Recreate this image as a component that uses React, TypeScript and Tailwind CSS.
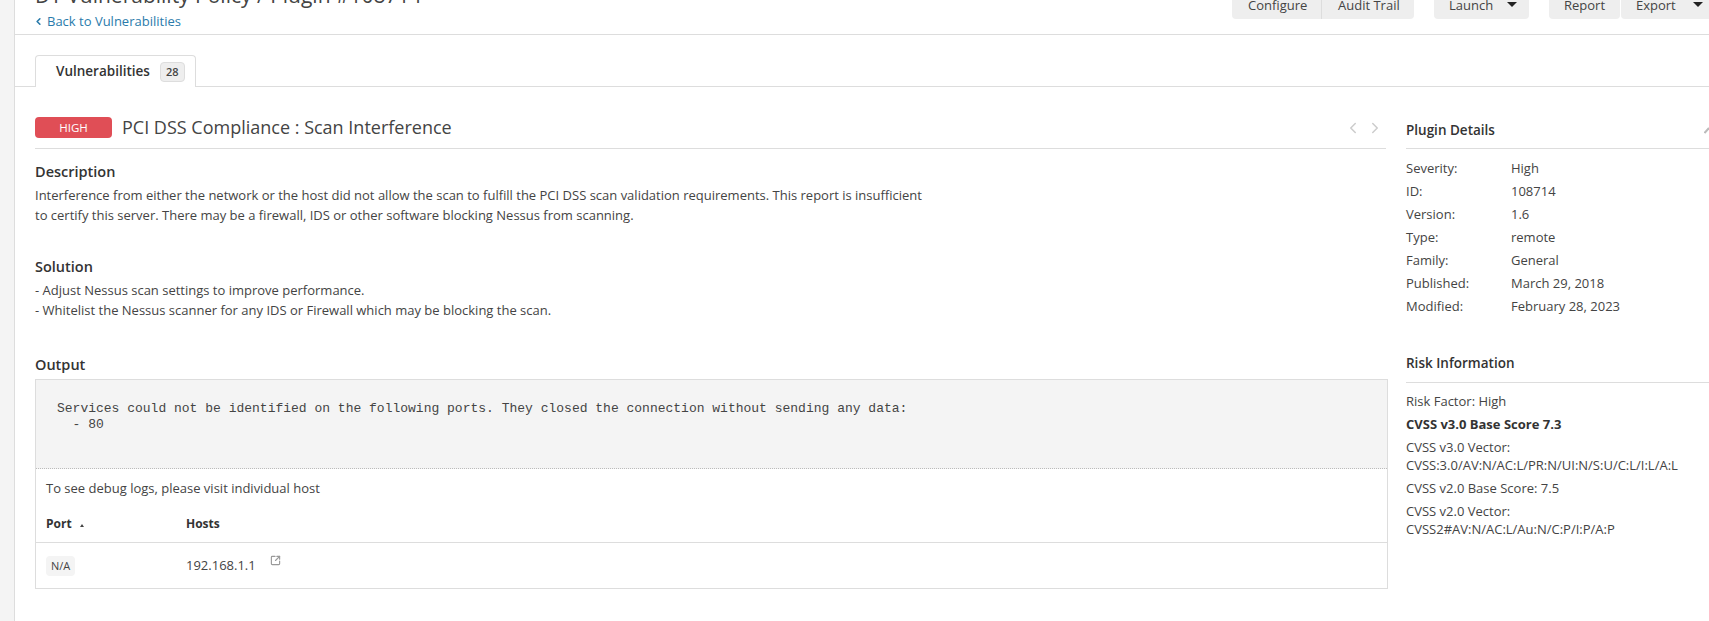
import { ChevronLeft, ChevronRight, SquareArrowOutUpRight } from "lucide-react";

const PLUGIN_DETAILS = [
  ["Severity:", "High"],
  ["ID:", "108714"],
  ["Version:", "1.6"],
  ["Type:", "remote"],
  ["Family:", "General"],
  ["Published:", "March 29, 2018"],
  ["Modified:", "February 28, 2023"],
];

function Caret() {
  return (
    <span className="block h-0 w-0 border-x-[5px] border-t-[5px] border-x-transparent border-t-[#222]" />
  );
}

function Toolbar() {
  return (
    <div className="-mr-[12px] flex h-[19px] shrink-0 text-[13px] leading-[10px] text-[#444]">
      <div className="flex h-[19px] w-[182px] overflow-hidden rounded-b bg-[#eee]">
        <span className="w-[90px] border-r border-[#ddd] pl-4">Configure</span>
        <span className="pl-[16px]">Audit Trail</span>
      </div>
      <div className="ml-5 flex h-[19px] w-[95px] rounded-b bg-[#eee] pl-[15px]">
        <span>Launch</span>
        <span className="mt-[2px] ml-[14px]">
          <Caret />
        </span>
      </div>
      <div className="ml-5 h-[19px] w-[71px] rounded-b bg-[#eee] pl-[15px]">Report</div>
      <div className="ml-px flex h-[19px] w-[100px] rounded-bl bg-[#eee] pl-[15px]">
        <span>Export</span>
        <span className="mt-[2px] ml-[17px]">
          <Caret />
        </span>
      </div>
    </div>
  );
}

export default function App() {
  return (
    <div className="flex h-[621px] w-[1709px] overflow-hidden bg-white font-['Open_Sans',sans-serif] text-[13px] text-[#444]">
      <div className="w-[15px] shrink-0 border-r border-[#ddd] bg-[#f4f4f4]" />
      <div className="min-w-0 flex-1">
        {/* Header */}
        <div className="flex h-[35px] justify-between overflow-hidden border-b border-[#ddd] pl-5">
          <div>
            <div className="-mt-[17px] text-[21px] leading-[24px] text-[#444]">
              DT Vulnerability Policy / Plugin #108714
            </div>
            <div className="mt-[4px] flex items-center text-[13px] leading-[20px] text-[#2a7bab]">
              <ChevronLeft className="mr-[3px] -ml-[2px] h-[11px] w-[11px]" strokeWidth={3.5} />
              Back to Vulnerabilities
            </div>
          </div>
          <Toolbar />
        </div>

        {/* Tabs */}
        <div className="mt-5 flex h-[32px] border-b border-[#ddd] pl-5">
          <div className="flex h-[32px] w-[161px] items-center rounded-t border-x border-t border-[#ddd] bg-white pl-5">
            <span className="text-[13.5px] font-semibold text-[#333]">Vulnerabilities</span>
            <span className="ml-[10px] rounded-sm border border-[#ddd] bg-[#eee] px-[5px] text-[11px] leading-[18px] font-semibold text-[#444]">
              28
            </span>
          </div>
        </div>

        <div className="flex pl-5">
          {/* Main column */}
          <div className="w-[1353px] shrink-0">
            <div className="mt-[30px] mr-[2px] flex h-[32px] items-start border-b border-[#ddd]">
              <span className="flex h-[21px] w-[77px] items-center justify-center rounded-sm bg-[#e04e56] text-[11.5px] text-white">
                HIGH
              </span>
              <span className="ml-[10px] text-[18px] leading-[21px] text-[#444]">
                PCI DSS Compliance : Scan Interference
              </span>
              <div className="mt-[2px] mr-[2px] ml-auto flex gap-[4px] text-[#ccc]">
                <ChevronLeft className="h-[18px] w-[18px]" />
                <ChevronRight className="h-[18px] w-[18px]" />
              </div>
            </div>

            <h3 className="mt-[13px] text-[14.5px] leading-[20px] font-semibold text-[#333]">Description</h3>
            <p className="mt-[3px] w-[900px] text-[13px] leading-[20px]">
              Interference from either the network or the host did not allow the scan to fulfill the PCI DSS scan validation requirements. This report is insufficient
              <br />
              to certify this server. There may be a firewall, IDS or other software blocking Nessus from scanning.
            </p>

            <h3 className="mt-[32px] text-[14.5px] leading-[20px] font-semibold text-[#333]">Solution</h3>
            <p className="mt-[3px] text-[13px] leading-[20px]">
              - Adjust Nessus scan settings to improve performance.
              <br />
              - Whitelist the Nessus scanner for any IDS or Firewall which may be blocking the scan.
            </p>

            <h3 className="mt-[35px] text-[14.5px] leading-[20px] font-semibold text-[#333]">Output</h3>

            <div className="mt-[4px] border border-[#ddd]">
              <pre className="h-[89px] border-b border-dotted border-[#bbb] bg-[#f4f4f4] pt-[21px] pl-[21px] font-['Liberation_Mono',monospace] text-[13px] leading-[16px] text-[#444]">
                {"Services could not be identified on the following ports. They closed the connection without sending any data:\n  - 80"}
              </pre>
              <div className="pt-[9px] pl-[10px] text-[13px] leading-[20px]">
                To see debug logs, please visit individual host
              </div>
              <div className="mt-[17px] flex h-[28px] border-b border-[#ddd] pl-[10px] text-[12px] font-bold text-[#333]">
                <div className="flex w-[140px] items-start">
                  Port
                  <span className="mt-[9px] ml-2 h-0 w-0 border-x-[2px] border-b-[3px] border-x-transparent border-b-[#444]" />
                </div>
                <div>Hosts</div>
              </div>
              <div className="flex h-[45px] items-center pl-[10px]">
                <div className="w-[140px]">
                  <span className="inline-block h-[20px] rounded-sm bg-[#f4f4f4] px-[5px] text-[11px] leading-[20px]">N/A</span>
                </div>
                <span className="text-[13px]">192.168.1.1</span>
                <SquareArrowOutUpRight className="mb-[10px] ml-[14px] h-[11px] w-[11px] text-[#999]" strokeWidth={2.5} />
              </div>
            </div>
          </div>

          {/* Plugin sidebar */}
          <div className="ml-[18px] w-[330px] shrink-0">
            <h3 className="mt-[31px] flex h-[31px] justify-between border-b border-[#ddd] text-[13.5px] leading-[24px] font-semibold text-[#333]">
              Plugin Details
              <svg className="mt-[8px] mr-[22px]" fill="none" height="10" viewBox="0 0 10 10" width="10">
                <path d="M0.5 7 L5 2" stroke="#bbb" strokeWidth="2" />
              </svg>
            </h3>
            <div className="mt-[8px] text-[13px] leading-[23px]">
              {PLUGIN_DETAILS.map(([label, value]) => (
                <div className="flex" key={label}>
                  <span className="w-[105px]">{label}</span>
                  <span>{value}</span>
                </div>
              ))}
            </div>
            <h3 className="mt-[33px] flex h-[32px] border-b border-[#ddd] text-[13.5px] leading-[24px] font-semibold text-[#333]">
              Risk Information
            </h3>
            <div className="mt-[7px] text-[13px] leading-[18px]">
              <p className="leading-[23px]">Risk Factor: High</p>
              <p className="leading-[23px] font-bold text-[#333]">CVSS v3.0 Base Score 7.3</p>
              <p className="mt-[2px]">
                CVSS v3.0 Vector:
                <br />
                CVSS:3.0/AV:N/AC:L/PR:N/UI:N/S:U/C:L/I:L/A:L
              </p>
              <p className="mt-[5px]">CVSS v2.0 Base Score: 7.5</p>
              <p className="mt-[5px]">
                CVSS v2.0 Vector:
                <br />
                CVSS2#AV:N/AC:L/Au:N/C:P/I:P/A:P
              </p>
            </div>
          </div>
        </div>
      </div>
    </div>
  );
}
